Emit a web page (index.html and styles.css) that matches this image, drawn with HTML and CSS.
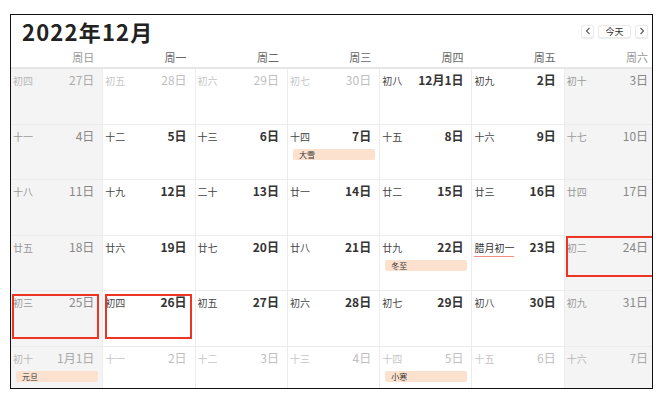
FILE: index.html
```html
<!DOCTYPE html>
<html lang="zh-CN">
<head>
    <meta charset="UTF-8">
    <meta name="viewport" content="width=device-width, initial-scale=1.0">
    <title>2022年12月</title>
    <link rel="stylesheet" href="styles.css">
</head>
<body>

    <div class="frame">
        <div class="toolbar">
            <h1 class="month-title">2022年12月</h1>
            <div class="nav">
                <button class="nav-btn nav-arrow">
                    <svg width="6" height="8" viewBox="0 0 6 8"><path d="M4.5 0.8 L1.5 4 L4.5 7.2" fill="none" stroke="#555" stroke-width="1.1"/></svg>
                </button>
                <button class="nav-btn nav-today">今天</button>
                <button class="nav-btn nav-arrow">
                    <svg width="6" height="8" viewBox="0 0 6 8"><path d="M1.5 0.8 L4.5 4 L1.5 7.2" fill="none" stroke="#555" stroke-width="1.1"/></svg>
                </button>
            </div>
        </div>

        <div class="weekdays">
            <div class="weekday weekend">周日</div>
            <div class="weekday">周一</div>
            <div class="weekday">周二</div>
            <div class="weekday">周三</div>
            <div class="weekday">周四</div>
            <div class="weekday">周五</div>
            <div class="weekday weekend">周六</div>
        </div>

        <div class="month-grid" id="month-grid"></div>
    </div>

    <script>
        // 每格: [公历, 农历, 是否本月, 节气/节日, 标记]
        const days = [
            ['27日', '初四', false], ['28日', '初五', false], ['29日', '初六', false], ['30日', '初七', false],
            ['12月1日', '初八', true], ['2日', '初九', true], ['3日', '初十', true],
            ['4日', '十一', true], ['5日', '十二', true], ['6日', '十三', true], ['7日', '十四', true, '大雪'],
            ['8日', '十五', true], ['9日', '十六', true], ['10日', '十七', true],
            ['11日', '十八', true], ['12日', '十九', true], ['13日', '二十', true], ['14日', '廿一', true],
            ['15日', '廿二', true], ['16日', '廿三', true], ['17日', '廿四', true],
            ['18日', '廿五', true], ['19日', '廿六', true], ['20日', '廿七', true], ['21日', '廿八', true],
            ['22日', '廿九', true, '冬至'], ['23日', '腊月初一', true, null, 'month-start'], ['24日', '初二', true, null, 'mark-a'],
            ['25日', '初三', true, null, 'mark-b'], ['26日', '初四', true, null, 'mark-c'], ['27日', '初五', true], ['28日', '初六', true],
            ['29日', '初七', true], ['30日', '初八', true], ['31日', '初九', true],
            ['1月1日', '初十', false, '元旦'], ['2日', '十一', false], ['3日', '十二', false], ['4日', '十三', false],
            ['5日', '十四', false, '小寒'], ['6日', '十五', false], ['7日', '十六', false]
        ];

        const grid = document.getElementById('month-grid');

        days.forEach((d, i) => {
            const [solar, lunar, current, event, mark] = d;
            const cell = document.createElement('div');
            cell.className = 'day';
            if (i % 7 === 0 || i % 7 === 6) cell.classList.add('weekend');
            if (!current) cell.classList.add('other-month');
            if (mark && mark !== 'month-start') cell.classList.add('marked', mark);

            const lunarClass = mark === 'month-start' ? 'lunar lunar-month' : 'lunar';
            cell.innerHTML = `
                <div class="day-head">
                    <span class="${lunarClass}">${lunar}</span>
                    <span class="solar">${solar}</span>
                </div>
            `;
            if (event) {
                cell.innerHTML += `<div class="event">${event}</div>`;
            }
            grid.appendChild(cell);
        });
    </script>

</body>
</html>
```

FILE: styles.css
```css
/* Global Style */
body {
    margin: 0;
    background-color: #fff;
    font-family: "Noto Sans CJK SC", "Liberation Sans", sans-serif;
    color: #333;
}

.frame {
    position: relative;
    margin: 14px 0 0 10px;
    width: 641px;
    height: 373px;
    border: 1px solid #111;
    overflow: hidden;
    background-color: #fff;
}

/* Toolbar */
.toolbar {
    display: flex;
    justify-content: space-between;
    align-items: center;
    height: 32px;
    padding: 0 4px 0 11px;
}

.month-title {
    margin: 0;
    font-size: 22px;
    font-weight: bold;
    letter-spacing: 1.2px;
    color: #222;
    line-height: 32px;
}

.nav {
    display: flex;
    gap: 4px;
    align-items: center;
}

.nav-btn {
    display: flex;
    align-items: center;
    justify-content: center;
    height: 13px;
    padding: 0;
    border: 1px solid #ececec;
    border-radius: 3px;
    background-color: #fff;
    box-shadow: 0 0.5px 1px rgba(0, 0, 0, 0.08);
    font-family: inherit;
    font-size: 9px;
    color: #333;
}

.nav-arrow {
    width: 13px;
}

.nav-today {
    width: 33px;
}

/* Weekday header */
.weekdays {
    display: grid;
    grid-template-columns: repeat(7, 92.3px);
    height: 20px;
    border-bottom: 2px solid #e6e6e6;
}

.weekday {
    text-align: right;
    padding-right: 9px;
    font-size: 11px;
    line-height: 20px;
    color: #666;
}

.weekday.weekend {
    color: #999;
}

/* Month grid */
.month-grid {
    display: grid;
    grid-template-columns: repeat(7, 92.3px);
    grid-auto-rows: 55.5px;
}

.day {
    position: relative;
    border-right: 1px solid #ececec;
    border-bottom: 1px solid #ececec;
    box-sizing: border-box;
    background-color: #fff;
}

.day.weekend {
    background-color: #f4f4f4;
}

.day-head {
    display: flex;
    justify-content: space-between;
    align-items: baseline;
    padding: 4px 8px 0 2px;
    line-height: 14px;
}

.lunar {
    font-size: 10px;
    color: #444;
}

.solar {
    font-size: 12px;
    font-weight: bold;
    color: #333;
}

.lunar-month {
    color: #333;
    border-bottom: 1px solid #f08c84;
    padding-bottom: 1px;
}

.day.weekend .lunar {
    color: #999;
}

.day.weekend .solar {
    font-weight: normal;
    color: #888;
}

.day.other-month .lunar {
    color: #c6c6c6;
}

.day.other-month .solar {
    font-weight: normal;
    color: #c0c0c0;
}

.day.weekend.other-month .lunar {
    color: #b8b8b8;
}

.day.weekend.other-month .solar {
    color: #aaa;
}

.event {
    margin: 5px 4px 0 5px;
    height: 11px;
    padding-left: 6px;
    border-radius: 2px;
    background-color: #fde1cf;
    font-size: 8px;
    line-height: 11px;
    color: #333;
}

/* Red markers drawn over cells */
.marked::after {
    content: "";
    position: absolute;
    border: 2px solid #ee3524;
    box-sizing: border-box;
}

.mark-a::after {
    left: 1px;
    top: 0;
    width: 88px;
    height: 41px;
}

.mark-b::after {
    left: 1px;
    top: 3px;
    width: 87px;
    height: 45px;
}

.mark-c::after {
    left: 2px;
    top: 3px;
    width: 87px;
    height: 45px;
}
```
